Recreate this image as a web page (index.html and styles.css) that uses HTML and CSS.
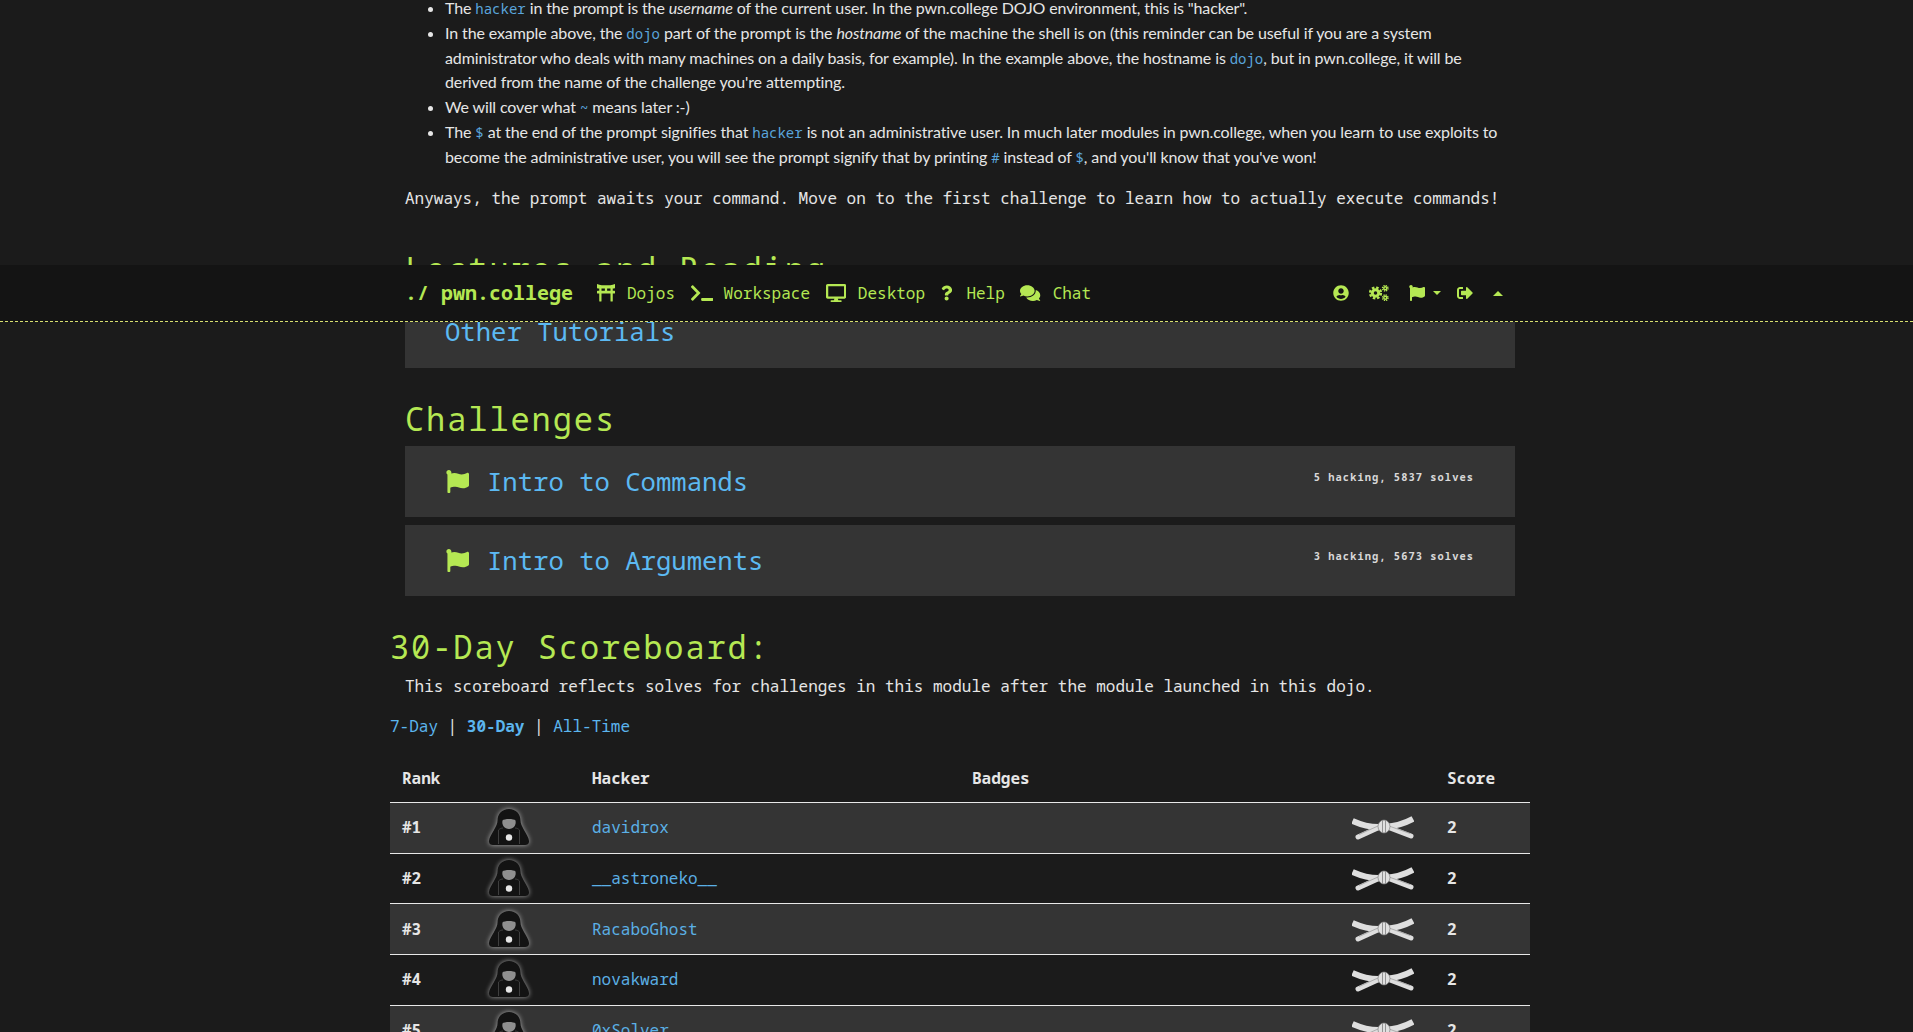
FILE: index.html
```html
<!DOCTYPE html>
<html lang="en">
<head>
<meta charset="utf-8">
<title>pwn.college</title>
<link rel="stylesheet" href="styles.css">
</head>
<body>
<svg class="defs" width="0" height="0" aria-hidden="true">
  <defs>
    <symbol id="i-flag" viewBox="0 0 512 512"><path d="M349.565 98.783C295.978 98.783 251.721 64 184.348 64c-24.955 0-47.309 4.384-68.045 12.013a55.947 55.947 0 0 0 3.586-23.562C118.117 24.015 94.806 1.206 66.338.048 34.345-1.254 8 24.296 8 56c0 19.026 9.497 35.825 24 45.945V488c0 13.255 10.745 24 24 24h16c13.255 0 24-10.745 24-24v-94.4c28.311-12.064 63.582-22.122 114.435-22.122 53.588 0 97.844 34.783 165.217 34.783 48.169 0 86.667-16.294 122.505-40.858C506.84 359.452 512 349.571 512 339.045v-243.1c0-23.393-24.269-38.87-45.485-29.016-34.338 15.948-76.454 31.854-116.95 31.854z"/></symbol>
    <symbol id="i-avatar" viewBox="0 0 48 44">
      <path d="M24 4C17 4 12.500 9 12.500 15.500C12.500 18.500 11 21 9 25C6.500 29.500 3.500 33.500 4 37C4.300 39 5.500 40 8 40H40C42.500 40 43.700 39 44 37C44.500 33.500 41.500 29.500 39 25C37 21 35.500 18.500 35.500 15.500C35.500 9 31 4 24 4Z" fill="#131313"/>
      <path d="M17.500 15.500C19 13.500 29 13.500 30.500 15.500C31.500 20 28.500 24 24 24C19.500 24 16.500 20 17.500 15.500Z" fill="#8f8f8f"/>
      <path d="M13.500 25V39M34.500 25V39M13.500 25C15 23.500 16.500 23 18 23M34.500 25C33 23.500 31.500 23 30 23" stroke="#3e3e3e" stroke-width="1" fill="none"/>
      <circle cx="24" cy="32.500" r="3.200" fill="#e6e6e6"/>
    </symbol>
    <symbol id="i-belt" viewBox="0 0 62 24">
      <g fill="none" stroke="#dedede">
        <path d="M.5 5Q16 12 30 11" stroke-width="6"/>
        <path d="M61 3Q48 10 33 11" stroke-width="6"/>
        <path d="M6 21L29 10.500" stroke-width="5" stroke-linecap="round"/>
        <path d="M59 20L34 10.500" stroke-width="5" stroke-linecap="round"/>
      </g>
      <path d="M7 18.500L26 10M58 17.500L37 10" stroke="#8a8a8a" stroke-width=".6" fill="none"/>
      <ellipse cx="32" cy="10.500" rx="6" ry="6.500" fill="#e0e0e0" stroke="#808080" stroke-width=".7"/>
      <path d="M30.500 4.300V16.700M33.500 4.300V16.700" stroke="#8a8a8a" stroke-width=".9"/>
    </symbol>
  </defs>
</svg>

<nav class="topbar">
  <div class="topbar-inner">
    <a class="brand">./ pwn.college</a>
    <ul class="nav-left">
      <li class="nav-item">
        <svg class="icon w18" viewBox="0 0 512 512"><path d="M376.450 32h-240.900A303.170 303.170 0 0 1 0 0v96c0 17.670 14.330 32 32 32h32v64H16c-8.840 0-16 7.160-16 16v48c0 8.840 7.160 16 16 16h48v208c0 8.840 7.160 16 16 16h32c8.840 0 16-7.160 16-16V272h256v208c0 8.840 7.160 16 16 16h32c8.840 0 16-7.160 16-16V272h48c8.840 0 16-7.160 16-16v-48c0-8.840-7.160-16-16-16h-48v-64h32c17.670 0 32-14.330 32-32V0a303.170 303.170 0 0 1-135.550 32zM128 128h96v64h-96v-64zm256 64h-96v-64h96v64z"/></svg>
        <span>Dojos</span>
      </li>
      <li class="nav-item">
        <svg class="icon w22" viewBox="0 0 640 512"><path d="M257.981 272.971L63.638 467.314c-9.373 9.373-24.569 9.373-33.941 0L7.029 444.647c-9.357-9.357-9.375-24.522-.04-33.901L161.011 256 6.990 101.255c-9.335-9.379-9.317-24.544.04-33.901l22.667-22.667c9.373-9.373 24.569-9.373 33.941 0L257.981 239.030c9.373 9.372 9.373 24.568 0 33.941zM640 456v-32c0-13.255-10.745-24-24-24H312c-13.255 0-24 10.745-24 24v32c0 13.255 10.745 24 24 24h304c13.255 0 24-10.745 24-24z"/></svg>
        <span>Workspace</span>
      </li>
      <li class="nav-item">
        <svg class="icon w20" viewBox="0 0 576 512"><path d="M528 0H48C21.500 0 0 21.500 0 48v320c0 26.500 21.500 48 48 48h192l-16 48h-72c-13.300 0-24 10.700-24 24s10.700 24 24 24h272c13.300 0 24-10.700 24-24s-10.700-24-24-24h-72l-16-48h192c26.500 0 48-21.500 48-48V48c0-26.500-21.500-48-48-48zm-16 352H64V64h448v288z"/></svg>
        <span>Desktop</span>
      </li>
      <li class="nav-item">
        <svg class="icon w11" viewBox="0 0 384 512"><path d="M202.021 0C122.202 0 70.503 32.703 29.914 91.026c-7.363 10.580-5.093 25.086 5.178 32.874l43.138 32.709c10.373 7.865 25.132 6.026 33.253-4.148 25.049-31.381 43.630-49.449 82.757-49.449 30.764 0 68.816 19.799 68.816 49.631 0 22.552-18.617 34.134-48.993 51.164-35.423 19.860-82.299 44.576-82.299 106.405V320c0 13.255 10.745 24 24 24h72.471c13.255 0 24-10.745 24-24v-5.773c0-42.860 125.268-44.645 125.268-160.627C377.504 66.256 286.902 0 202.021 0zM192 373.459c-38.196 0-69.271 31.075-69.271 69.271 0 38.195 31.075 69.270 69.271 69.270s69.271-31.075 69.271-69.271-31.075-69.270-69.271-69.270z"/></svg>
        <span>Help</span>
      </li>
      <li class="nav-item">
        <svg class="icon w20" viewBox="0 0 576 512"><path d="M416 192c0-88.400-93.100-160-208-160S0 103.600 0 192c0 34.300 14.100 65.900 38 92-13.400 30.200-35.500 54.200-35.800 54.500-2.200 2.300-2.800 5.700-1.500 8.700S4.800 352 8 352c36.600 0 66.900-12.300 88.700-25 32.200 15.700 70.300 25 111.300 25 114.900 0 208-71.600 208-160zm122 220c23.900-26 38-57.700 38-92 0-66.900-53.500-124.200-129.300-148.100.9 6.600 1.300 13.300 1.300 20.100 0 105.900-107.700 192-240 192-10.800 0-21.300-.8-31.700-1.900C207.800 439.600 281.800 480 368 480c41 0 79.100-9.200 111.300-25 21.800 12.700 52.100 25 88.700 25 3.200 0 6.100-1.900 7.300-4.800 1.300-2.900.7-6.300-1.500-8.700-.3-.3-22.400-24.200-35.800-54.500z"/></svg>
        <span>Chat</span>
      </li>
    </ul>
    <ul class="nav-right">
      <li><svg class="icon i16" viewBox="0 0 496 512"><path d="M248 8C111 8 0 119 0 256s111 248 248 248 248-111 248-248S385 8 248 8zm0 96c48.600 0 88 39.400 88 88s-39.400 88-88 88-88-39.400-88-88 39.400-88 88-88zm0 344c-58.700 0-111.300-26.600-146.500-68.200 18.800-35.400 55.600-59.800 98.500-59.800 2.400 0 4.800.4 7.100 1.100 13 4.200 26.600 6.900 40.900 6.900 14.300 0 28-2.700 40.900-6.900 2.300-.7 4.700-1.100 7.100-1.100 42.900 0 79.700 24.400 98.500 59.800C359.300 421.400 306.700 448 248 448z"/></svg></li>
      <li>
        <svg class="icon cogs" viewBox="0 0 40 32">
          <g fill="none" stroke="#b5e853">
            <circle cx="13" cy="16" r="6.500" stroke-width="6"/>
            <circle cx="13" cy="16" r="11" stroke-width="4.500" stroke-dasharray="5 3.640"/>
            <circle cx="32.500" cy="6.500" r="3" stroke-width="2.800"/>
            <circle cx="32.500" cy="6.500" r="5.500" stroke-width="2.800" stroke-dasharray="2.500 1.820"/>
            <circle cx="32.500" cy="25.500" r="3" stroke-width="2.800"/>
            <circle cx="32.500" cy="25.500" r="5.500" stroke-width="2.800" stroke-dasharray="2.500 1.820"/>
          </g>
        </svg>
      </li>
      <li class="flag-item">
        <svg class="icon i16"><use href="#i-flag"/></svg>
        <span class="caret-down"></span>
      </li>
      <li><svg class="icon i16" viewBox="0 0 512 512"><path d="M497 273L329 441c-15 15-41 4.500-41-17v-96H152c-13.300 0-24-10.700-24-24v-96c0-13.300 10.700-24 24-24h136V88c0-21.400 25.900-32 41-17l168 168c9.300 9.400 9.300 24.600 0 34zM192 436v-40c0-6.600-5.400-12-12-12H96c-17.700 0-32-14.300-32-32V160c0-17.700 14.300-32 32-32h84c6.600 0 12-5.400 12-12V76c0-6.600-5.400-12-12-12H96c-53 0-96 43-96 96v192c0 53 43 96 96 96h84c6.600 0 12-5.400 12-12z"/></svg></li>
      <li><span class="caret-up"></span></li>
    </ul>
  </div>
</nav>

<main class="page">
  <article class="module">
    <ul class="notes">
      <li>The <code>hacker</code> in the prompt is the <em>username</em> of the current user. In the pwn.college DOJO environment, this is "hacker".</li>
      <li>In the example above, the <code>dojo</code> part of the prompt is the <em>hostname</em> of the machine the shell is on (this reminder can be useful if you are a system administrator who deals with many machines on a daily basis, for example). In the example above, the hostname is <code>dojo</code>, but in pwn.college, it will be derived from the name of the challenge you're attempting.</li>
      <li>We will cover what <code>~</code> means later :-)</li>
      <li>The <code>$</code> at the end of the prompt signifies that <code>hacker</code> is not an administrative user. In much later modules in pwn.college, when you learn to use exploits to become the administrative user, you will see the prompt signify that by printing <code>#</code> instead of <code>$</code>, and you'll know that you've won!</li>
    </ul>
    <p class="lead">Anyways, the prompt awaits your command. Move on to the first challenge to learn how to actually execute commands!</p>

    <h2 class="section-title lectures">Lectures and Reading</h2>
    <div class="card card-plain"><a class="card-title">Other Tutorials</a></div>

    <h2 class="section-title challenges">Challenges</h2>
    <div class="card">
      <svg class="card-flag"><use href="#i-flag"/></svg>
      <a class="card-title">Intro to Commands</a>
      <span class="card-stat">5 hacking, 5837 solves</span>
    </div>
    <div class="card">
      <svg class="card-flag"><use href="#i-flag"/></svg>
      <a class="card-title">Intro to Arguments</a>
      <span class="card-stat">3 hacking, 5673 solves</span>
    </div>
  </article>

  <section class="scoreboard">
    <h2 class="section-title board-title">30-Day Scoreboard:</h2>
    <p class="board-note">This scoreboard reflects solves for challenges in this module after the module launched in this dojo.</p>
    <p class="board-range"><a>7-Day</a> | <a class="active">30-Day</a> | <a>All-Time</a></p>
    <table class="board">
      <colgroup><col class="c-rank"><col class="c-avatar"><col class="c-hacker"><col class="c-badges"><col class="c-score"></colgroup>
      <thead>
        <tr><th>Rank</th><th></th><th>Hacker</th><th>Badges</th><th>Score</th></tr>
      </thead>
      <tbody>
        <tr><td class="strong">#1</td><td><svg class="avatar"><use href="#i-avatar"/></svg></td><td><a>davidrox</a></td><td class="badges"><svg class="belt"><use href="#i-belt"/></svg></td><td class="strong">2</td></tr>
        <tr><td class="strong">#2</td><td><svg class="avatar"><use href="#i-avatar"/></svg></td><td><a>__astroneko__</a></td><td class="badges"><svg class="belt"><use href="#i-belt"/></svg></td><td class="strong">2</td></tr>
        <tr><td class="strong">#3</td><td><svg class="avatar"><use href="#i-avatar"/></svg></td><td><a>RacaboGhost</a></td><td class="badges"><svg class="belt"><use href="#i-belt"/></svg></td><td class="strong">2</td></tr>
        <tr><td class="strong">#4</td><td><svg class="avatar"><use href="#i-avatar"/></svg></td><td><a>novakward</a></td><td class="badges"><svg class="belt"><use href="#i-belt"/></svg></td><td class="strong">2</td></tr>
        <tr><td class="strong">#5</td><td><svg class="avatar"><use href="#i-avatar"/></svg></td><td><a>0xSolver</a></td><td class="badges"><svg class="belt"><use href="#i-belt"/></svg></td><td class="strong">2</td></tr>
      </tbody>
    </table>
  </section>
</main>
</body>
</html>
```

FILE: styles.css
```css
* { box-sizing: border-box; }
html, body { height: 100%; }
body {
  margin: 0;
  overflow: hidden;
  background: #1b1b1b;
  color: #e6e6e6;
  font-family: "Noto Sans Mono", "DejaVu Sans Mono", monospace;
  font-size: 16px;
  line-height: 24px;
  position: relative;
}
.defs { position: absolute; }
a { color: #5bb5ee; text-decoration: none; }

.page { width: 1920px; padding: 0 390px; margin-top: -4px; }
.module { padding: 0 15px; }

.notes {
  margin: 0 0 16px;
  padding-left: 40px;
  font-family: "Lato", sans-serif;
  line-height: 24.8px;
  letter-spacing: -.12px;
}
.notes code {
  font-family: "Noto Sans Mono", "DejaVu Sans Mono", monospace;
  font-size: 14px;
  line-height: 1;
  letter-spacing: 0;
  color: #5aa5dc;
}
.lead { margin: 0; }

.section-title {
  margin: 0;
  font-weight: 400;
  font-size: 32px;
  line-height: 38px;
  letter-spacing: 1.9px;
  color: #b5e853;
}
.lectures { margin: 40px 0 9px; }
.challenges { margin: 32px 0 8px; }
.board-title { margin: 32px 0 8px; }

.card {
  position: relative;
  display: flex;
  align-items: center;
  height: 71px;
  margin-bottom: 8px;
  padding: 2px 41px 0;
  background: #343434;
}
.card-plain { margin-bottom: 0; padding: 0 40px; }
.card-title {
  font-size: 25.6px;
  color: #5cb9f2;
}
.card-flag {
  width: 23px;
  height: 23px;
  margin: -2px 18px 0 0;
  fill: #b5e853;
}
.card-stat {
  position: absolute;
  top: 22px;
  right: 41px;
  font-size: 10.4px;
  font-weight: 700;
  letter-spacing: 1.05px;
  line-height: 18px;
  color: #d8d8d8;
}

.board-note { margin: 0 0 16px; padding-left: 15px; }
.board-range { margin: 0 0 16px; }
.board-range .active { font-weight: 700; }

.board {
  width: 1140px;
  table-layout: fixed;
  border-collapse: collapse;
}
.c-rank { width: 80px; }
.c-avatar { width: 110px; }
.c-hacker { width: 380px; }
.c-badges { width: 475px; }
.c-score { width: 95px; }
.board th, .board td { padding: 0 12px; text-align: left; }
.board th { height: 49px; font-weight: 700; }
.board td { height: 50.67px; padding-bottom: 1px; border-top: 1px solid #e8e8e8; }
.board tbody tr:nth-child(odd) { background: #343434; }
.board td a { color: #5bb0e6; }
.board .strong { font-weight: 700; }
.board td.badges { padding-right: 21px; text-align: right; }
.avatar {
  display: block;
  width: 48px;
  height: 44px;
  margin-left: 3px;
  filter: drop-shadow(0 0 2.500px rgba(255,255,255,.6));
}
.belt { display: inline-block; vertical-align: middle; width: 62px; height: 24px; }

.topbar {
  position: absolute;
  top: 265px;
  left: 0;
  width: 100%;
  height: 57px;
  background: #141414;
  border-bottom: 1px dashed #d6e070;
  color: #b5e853;
  z-index: 5;
}
.topbar-inner {
  display: flex;
  align-items: center;
  height: 56px;
  width: 1920px;
  padding: 0 405px;
}
.brand {
  font-size: 20px;
  font-weight: 700;
  color: #b5e853;
  margin-right: 24px;
}
.nav-left, .nav-right {
  display: flex;
  align-items: center;
  list-style: none;
  margin: 0;
  padding: 0;
}
.nav-left { gap: 15.6px; }
.nav-item { display: flex; align-items: center; gap: 12px; }
.nav-right {
  position: absolute;
  left: 1333px;
  gap: 20px;
}
.nav-right li { display: flex; align-items: center; }
.flag-item { gap: 8px; margin-right: -4px; }
.icon { display: block; fill: #b5e853; height: 18px; }
.w18 { width: 18px; }
.w22 { width: 22.5px; margin-right: -1.5px; }
.w20 { width: 20.25px; }
.w11 { width: 11.25px; margin-right: 2.5px; }
.i16 { width: 16px; height: 16px; }
.cogs { width: 20px; height: 16px; }
.caret-down, .caret-up { display: block; width: 0; height: 0; border-left: 4px solid transparent; border-right: 4px solid transparent; }
.caret-down { border-top: 4px solid #b5e853; }
.caret-up { border-left-width: 5px; border-right-width: 5px; border-bottom: 5px solid #b5e853; }
```
